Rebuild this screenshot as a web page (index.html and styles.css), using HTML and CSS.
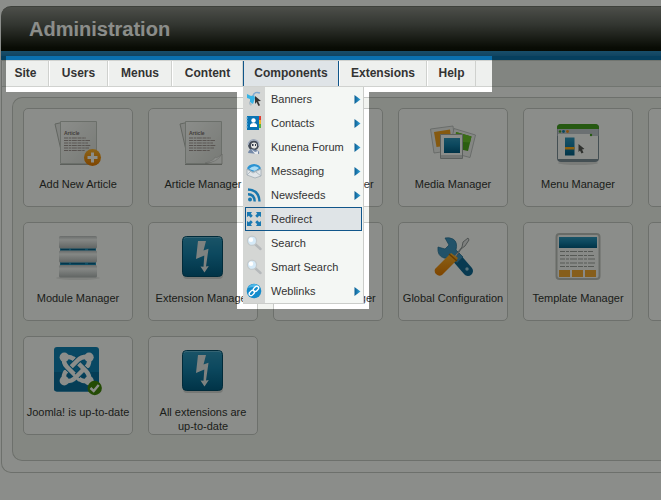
FILE: index.html
```html
<!DOCTYPE html>
<html lang="en">
<head>
<meta charset="utf-8">
<title>Administration</title>
<link rel="stylesheet" href="styles.css">
</head>
<body>
<svg class="defs" aria-hidden="true">
  <defs>
    <linearGradient id="paper" x1="0" y1="0" x2="1" y2="1"><stop offset="0" stop-color="#fff"/><stop offset="1" stop-color="#dcdddb"/></linearGradient>
    <linearGradient id="blue" x1="0" y1="0" x2="0" y2="1"><stop offset="0" stop-color="#2f96c0"/><stop offset=".45" stop-color="#1580ae"/><stop offset="1" stop-color="#005a84"/></linearGradient>
    <linearGradient id="bar" x1="0" y1="0" x2="0" y2="1"><stop offset="0" stop-color="#bfc1c4"/><stop offset=".3" stop-color="#f4f5f6"/><stop offset="1" stop-color="#b2b5b8"/></linearGradient>
    <linearGradient id="gold" x1="0" y1="0" x2="0" y2="1"><stop offset="0" stop-color="#ffb22e"/><stop offset="1" stop-color="#e87a00"/></linearGradient>
    <linearGradient id="tri" x1="0" y1="0" x2="1" y2="0"><stop offset="0" stop-color="#0b5e92"/><stop offset="1" stop-color="#36a6dc"/></linearGradient>
    <symbol id="i-article" viewBox="0 0 48 48">
      <path d="M1 5l9-2 2 34-3 3z" fill="#eee" stroke="#b5b7b4"/>
      <path d="M6.500 2.500h36v42h-36z" fill="url(#paper)" stroke="#c5c7c4"/>
      <path d="M6 45.500h37" stroke="#a9aba8"/>
      <text x="10" y="16" font-size="5" font-weight="bold" fill="#78696a">Article</text>
      <path d="M10 19h22M10 21.500h26M10 24h24M10 26.500h27M10 29h25M10 31.500h21" stroke="#a39797" stroke-width="1.200" stroke-dasharray="4 .7 2.500 .6 5 .7"/>
    </symbol>
    <symbol id="i-extension" viewBox="0 0 48 48">
      <rect x="4" y="6" width="40" height="40" rx="4" fill="#000" opacity=".15"/>
      <rect x="3.500" y="3.500" width="40" height="40" rx="4" fill="url(#blue)" stroke="#004a6c"/>
      <path d="M5 6q0-1.500 2-1.500h33q2 0 2 1.500" fill="none" stroke="#6dbbda" stroke-width=".8"/>
      <path d="M19 8h8l-2.500 9.500 5-1.800L27 33.500l2.800-.5-4.300 6.500-4-6 3 .3.800-11.300L17 26z" fill="#e8ebed"/>
    </symbol>
    <symbol id="i-search" viewBox="0 0 16 16">
      <path d="M9.500 9.500l5 4.500" stroke="#b5b9bb" stroke-width="2.400" stroke-linecap="round"/>
      <circle cx="6" cy="5.800" r="4.600" fill="#d5eaf8" stroke="#c4c9cb" stroke-width="1.200"/>
      <circle cx="5" cy="4.800" r="2.200" fill="#fff"/>
    </symbol>
    <symbol id="i-arrow" viewBox="0 0 7 9"><path d="M.5 0L6.500 4.500.5 9z" fill="url(#tri)"/></symbol>
  </defs>
</svg>

<div class="shell">
  <header class="banner"><h1>Administration</h1></header>

  <nav class="menubar" aria-label="Main">
    <ul class="menubar-list">
      <li><a href="#">Site</a></li>
      <li><a href="#">Users</a></li>
      <li><a href="#">Menus</a></li>
      <li><a href="#">Content</a></li>
      <li class="open"><a href="#">Components</a>
        <ul class="dropdown">
          <li><a href="#"><svg class="mini" viewBox="0 0 16 16"><path d="M1 3l4 2 3-1 1 3-2 6-3-2 0-3-3-1z" fill="#35b3e6"/><path d="M3 10l3 3-1 2-2-2z" fill="#aebcc4"/><path d="M7 5c1-4 4-4 7-3" fill="none" stroke="#7fa9d2" stroke-width="1.500"/><path d="M9 5l6 5-3 .3 2 4-1.500.7-2-4L9 13z" fill="#333"/></svg>Banners<svg class="arrow"><use href="#i-arrow"/></svg></a></li>
          <li><a href="#"><svg class="mini" viewBox="0 0 16 16"><rect x="1" y="1" width="12" height="14" fill="#0874b4"/><path d="M13 1h2v4h-2z" fill="#e23b2e"/><path d="M13 5h2v4h-2z" fill="#f4b62c"/><path d="M13 9h2v4h-2z" fill="#59b33a"/><path d="M0 3h2M0 6h2M0 9h2M0 12h2" stroke="#78b8dc"/><circle cx="7.500" cy="5.500" r="2.200" fill="#fff"/><path d="M4 12v-2q1-2 3.500-2T11 10v2z" fill="#fff"/></svg>Contacts<svg class="arrow"><use href="#i-arrow"/></svg></a></li>
          <li><a href="#"><svg class="mini" viewBox="0 0 16 16"><circle cx="7.500" cy="6" r="5.500" fill="#454c59"/><path d="M2 6q1-5 6-5 5 0 5 6" fill="none" stroke="#a7b2c4" stroke-width="1.300"/><circle cx="8" cy="6.500" r="3" fill="#e6e6e4"/><path d="M6 5h1.500v2H6zM9 5h1v2H9z" fill="#30394a"/><path d="M2 14q1-4 4-4l4 1q4 1 3 4z" fill="#7489a8"/><path d="M5 10l4 3 3-1v3H9z" fill="#e8ebef"/></svg>Kunena Forum<svg class="arrow"><use href="#i-arrow"/></svg></a></li>
          <li><a href="#"><svg class="mini" viewBox="0 0 16 16"><ellipse cx="8" cy="6.500" rx="7" ry="5.500" fill="#2b93d2"/><path d="M3 6q5-5 10-1l-4 3z" fill="#a9dcf5"/><path d="M1 6l6 3 8-3v7l-6 2-8-3z" fill="#e1e5e8" stroke="#9aa5ad" stroke-width=".7"/><path d="M1 6l6 4 8-4M1 12l4-4M15 13l-5-4" fill="none" stroke="#a3b0b9" stroke-width=".8"/></svg>Messaging<svg class="arrow"><use href="#i-arrow"/></svg></a></li>
          <li><a href="#"><svg class="mini" viewBox="0 0 16 16"><circle cx="4" cy="12.500" r="2" fill="#1977ae"/><path d="M2 7.200q6.500 0 6.700 7.300M2 2.500q11 .5 11.500 12" fill="none" stroke="#1977ae" stroke-width="2.400"/></svg>Newsfeeds<svg class="arrow"><use href="#i-arrow"/></svg></a></li>
          <li class="current"><a href="#"><svg class="mini" viewBox="0 0 16 16"><g fill="#1979b2"><path d="M1 1h5L4.800 2.700l2 2-2 2-2-2L1 6z"/><path d="M15 1h-5l1.200 1.700-2 2 2 2 2-2L15 6z"/><path d="M1 15h5l-1.200-1.700 2-2-2-2-2 2L1 10z"/><path d="M15 15h-5l1.200-1.700-2-2 2-2 2 2L15 10z"/></g></svg>Redirect</a></li>
          <li><a href="#"><svg class="mini"><use href="#i-search"/></svg>Search</a></li>
          <li><a href="#"><svg class="mini"><use href="#i-search"/></svg>Smart Search</a></li>
          <li><a href="#"><svg class="mini" viewBox="0 0 16 16"><circle cx="8" cy="8" r="7.300" fill="#138bcb"/><path d="M2 5q2-4 7-4 4 1 5 4-6-2-12 0z" fill="#50b8e8"/><g fill="none" stroke="#fff" stroke-width="1.400"><rect x="-3" y="-1.900" width="6" height="3.800" rx="1.900" transform="translate(5.800 10) rotate(-45)"/><rect x="-3" y="-1.900" width="6" height="3.800" rx="1.900" transform="translate(10 5.800) rotate(-45)"/></g></svg>Weblinks<svg class="arrow"><use href="#i-arrow"/></svg></a></li>
        </ul>
      </li>
      <li><a href="#">Extensions</a></li>
      <li><a href="#">Help</a></li>
    </ul>
  </nav>

  <main class="panel">
    <a class="card" href="#"><svg class="icon" viewBox="0 0 48 48"><use href="#i-article"/><circle cx="38.500" cy="38.500" r="8.500" fill="url(#gold)"/><path d="M38.500 33.500v10M33.500 38.500h10" stroke="#fff" stroke-width="3"/></svg><span>Add New Article</span></a>
    <a class="card" href="#"><svg class="icon" viewBox="0 0 48 48"><use href="#i-article"/><path d="M26 45q10-2 17-10v10z" fill="#f8f8f7" stroke="#a9aba8" stroke-width=".7"/><path d="M26 44q10-3 10-6 2 2 7-3-5 9-17 9z" fill="#fff" stroke="#bbb" stroke-width=".5"/></svg><span>Article Manager</span></a>
    <a class="card" href="#"><span class="icon"></span><span>Category Manager</span></a>
    <a class="card" href="#"><svg class="icon" viewBox="0 0 48 48"><g stroke="#b4b6b8" stroke-width=".8"><path d="M1.500 10L24 7l3 24-22 3z" fill="#f2f2f2"/><path d="M25 9.500L46.500 16 41 38.500 20 33z" fill="#f2f2f2"/></g><path d="M5 13l16-2.500L23 26 7.500 28z" fill="#f4a01e"/><path d="M27 13l15.500 4.500L39 32l-14-3z" fill="#4fa81c"/><path d="M27 13l15.500 4.500-1.500 6-14-1z" fill="#6cc42c"/><path d="M11.500 15.500h22v24h-22z" fill="#fff" stroke="#a9acae"/><path d="M12 36h21v3H12z" fill="#d4d6d8"/><path d="M15 19h16v15H15z" fill="url(#blue)"/></svg><span>Media Manager</span></a>
    <a class="card" href="#"><svg class="icon" viewBox="0 0 48 48"><ellipse cx="24" cy="44" rx="20" ry="2" fill="#000" opacity=".12"/><rect x="3" y="5" width="42" height="38" rx="4" fill="#7d8c9a"/><path d="M3 10V8.500Q3 5 7 5h34q4 0 4 3.500V10z" fill="#45a021"/><path d="M3.500 10h41v7h-41z" fill="#c5cad3"/><path d="M4 17h40v23H4z" fill="#fff"/><path d="M4 15h33v2.500H4z" fill="#fff"/><circle cx="6" cy="12.500" r="1.200" fill="#45a021"/><circle cx="9.500" cy="12.500" r="1.400" fill="#157fb2"/><circle cx="13.500" cy="12.500" r="1.400" fill="#f4901e"/><circle cx="37" cy="16" r="1.200" fill="#45a021"/><path d="M11 18.500h9.500v18H11z" fill="url(#blue)"/><path d="M11 28h9.500v2.500H11z" fill="#ffad1f"/><path d="M24.500 25l6 5-2.500.5 1.500 3-2 1-1.500-3-1.500 1.500z" fill="#555"/></svg><span>Menu Manager</span></a>
    <div class="card"></div>

    <a class="card" href="#"><svg class="icon" viewBox="0 0 48 48"><ellipse cx="24" cy="45" rx="22" ry="2" fill="#000" opacity=".08"/><path d="M6 14h36v20H6z" fill="#1b8cbd"/><path d="M7 16.500h34M7 30.500h34" stroke="#075f8c" stroke-width="1.500" stroke-dasharray="8 2 14 3"/><rect x="5" y="3" width="38" height="12.500" rx="1.500" fill="url(#bar)"/><rect x="5" y="17.500" width="38" height="12" rx="1.500" fill="url(#bar)"/><rect x="5" y="32" width="38" height="12.500" rx="1.500" fill="url(#bar)"/></svg><span>Module Manager</span></a>
    <a class="card" href="#"><svg class="icon"><use href="#i-extension"/></svg><span>Extension Manager</span></a>
    <a class="card" href="#"><span class="icon"></span><span>Language Manager</span></a>
    <a class="card" href="#"><svg class="icon" viewBox="0 0 48 48"><path d="M26 23L39 38" stroke="#0d6797" stroke-width="10" stroke-linecap="round"/><path d="M16 5l4 7-4 4-7-2q-1 9 6 11 4 1 7-1l6 6 6-6-7-7q2-8-3-11-4-2-8-1z" fill="#3d93c2" stroke="#236e98" stroke-width=".7"/><circle cx="38" cy="36" r="1.700" fill="#9dcae0"/><path d="M24 25L33 14l1-5 5-4 1 2-4 6-4 3-7 11z" fill="#e8e8ea" stroke="#777c82" stroke-width=".8"/><path d="M6 36L20 22l2-2 7 5-2 3-14 14q-3 2-6-1-2-2-1-5z" fill="url(#gold)"/><path d="M20 21l8 7" stroke="#ba6800" stroke-width="1.500"/></svg><span>Global Configuration</span></a>
    <a class="card" href="#"><svg class="icon" viewBox="0 0 48 48"><rect x="2.500" y="1" width="43" height="45" rx="3" fill="#fafafa" stroke="#bfc1be" stroke-width="2"/><path d="M5 4h38v11H5z" fill="url(#blue)"/><path d="M6 18.500h33M6 22.500h34M6 26h36M6 30h35M6 33.500h34" stroke="#9d9f9d" stroke-dasharray="5 1 3 1 7 1"/><path d="M5 37h11v7H5zM18 37h11v7H18zM31 37h11v7H31z" fill="#f6a933"/></svg><span>Template Manager</span></a>
    <div class="card"></div>

    <a class="card" href="#"><svg class="icon" viewBox="0 0 48 48"><rect x="0" y="0" width="45" height="44.500" rx="3" fill="#0d80b8"/><path d="M0 25h45v16.500q0 3-3 3H3q-3 0-3-3z" fill="#086ca0"/><g fill="none"><path d="M10 34q7 1 11-3l12-12" stroke="#0b76ac" stroke-width="6.500"/><path d="M10 34q7 1 11-3l12-12" stroke="#fff" stroke-width="4.500"/><path d="M35 34q1-6-3-10L19 11" stroke="#0b76ac" stroke-width="6.500"/><path d="M35 34q1-6-3-10L19 11" stroke="#fff" stroke-width="4.500"/><path d="M35 10q-7-1-11 3L12 25" stroke="#0b76ac" stroke-width="6.500"/><path d="M35 10q-7-1-11 3L12 25" stroke="#fff" stroke-width="4.500"/><path d="M10 10q-1 6 3 10l13 13" stroke="#0b76ac" stroke-width="6.500"/><path d="M10 10q-1 6 3 10l13 13" stroke="#fff" stroke-width="4.500"/><path d="M23 29l5-5" stroke="#0b76ac" stroke-width="6.500"/><path d="M20 32l9-9" stroke="#fff" stroke-width="4.500"/><path d="M10 10q6-1 10 2M35 10q1 6-2 10M35 34q-6 1-10-2M10 34q-1-6 2-10" stroke="#fff" stroke-width="4.500"/></g><g fill="#fff"><circle cx="10.300" cy="10.300" r="4.700"/><circle cx="35" cy="10.300" r="4.700"/><circle cx="10.300" cy="33.700" r="4.700"/><circle cx="35" cy="33.700" r="4.700"/></g><circle cx="40.700" cy="41" r="7.200" fill="#42850b"/><path d="M36.500 41l3.200 3 5-6" fill="none" stroke="#fff" stroke-width="2.400"/></svg><span>Joomla! is up-to-date</span></a>
    <a class="card" href="#"><svg class="icon"><use href="#i-extension"/></svg><span>All extensions are up-to-date</span></a>
  </main>
</div>
<div class="dimmer"></div>
</body>
</html>
```
FILE: styles.css
```css
* { box-sizing: border-box; }

body {
  margin: 0;
  min-height: 100vh;
  padding: 6px 0 0 1px;
  overflow: hidden;
  background: #fff;
  color: #333;
  font: 11px/14px "Liberation Sans", Arial, sans-serif;
}

a { color: inherit; text-decoration: none; }
ul { margin: 0; padding: 0; list-style: none; }
.defs { position: absolute; width: 0; height: 0; }

.shell {
  border: 1px solid #c8cac7;
  border-width: 0 0 1px 1px;
  border-radius: 10px 0 0 10px;
  padding-bottom: 11px;
}

/* Title strip with the blue rule below it */
.banner {
  display: flex;
  align-items: center;
  height: 54px;
  margin-left: -1px;
  padding: 0 28px 10px;
  border-top: 1px solid #70726e;
  border-radius: 10px 0 0 0;
  background:
    linear-gradient(#2b8cc4, #1f7ab6 50%, #0b70ae 60%, #0b70ae) bottom / 100% 9px no-repeat,
    linear-gradient(#8c8c89, #5c5e5a 40%, #10120a 92%, #0c0e08) top / 100% 44px no-repeat;
}

h1 {
  margin: 0;
  color: #fff;
  font-size: 20px;
  line-height: 24px;
}

/* Menu bar */
.menubar {
  border: 1px solid #d0d2cf;
  border-width: 1px 0;
  background: #eef0ee;
}

.menubar-list {
  display: grid;
  grid-template-columns: 47px 59px 64px 71px 96px 88px 49px;
}

.menubar-list > li {
  position: relative;
  border-right: 1px solid #cfd1ce;
  border-left: 1px solid #fff;
}

.menubar-list > li > a {
  display: block;
  text-align: center;
  font-size: 12px;
  font-weight: bold;
  line-height: 25px;
}

.menubar-list > .open {
  border-color: #10568a;
  background: #dfe4e7;
}

/* Open menu */
.dropdown {
  position: absolute;
  z-index: 2;
  top: 100%;
  left: -1px;
  width: 121px;
  margin-top: 1px;
  border: 1px solid #cbcdca;
  border-width: 0 1px 1px 0;
  background: linear-gradient(90deg, #d4d6d4 22px, #f4f7f4 22px);
}

.dropdown a {
  display: flex;
  align-items: center;
  height: 24px;
  margin: 0 1px 0 2px;
  border: 1px solid transparent;
}

.dropdown .current a {
  border-color: #10568a;
  background: linear-gradient(90deg, #d4d6d4 19px, #dfe4e7 19px);
}

.mini { width: 16px; height: 16px; margin-right: 9px; flex: none; }
.arrow { width: 7px; height: 9px; margin-left: auto; flex: none; }

/* Shortcut cards */
.panel {
  display: grid;
  grid-template-columns: repeat(6, 110px);
  grid-auto-rows: 99px;
  gap: 15px;
  margin: 10px 0 0 10px;
  padding: 10px 0 25px 10px;
  overflow: hidden;
  border: 1px solid #c8cac7;
  border-right: 0;
  border-radius: 10px 0 0 10px;
  background: #f2f4f0;
}

.card {
  display: flex;
  flex-direction: column;
  align-items: center;
  gap: 10px;
  padding: 10px 2px 0;
  border: 1px solid #c8cac7;
  border-radius: 5px;
  background: #fff;
  text-align: center;
}

.icon { width: 48px; height: 48px; flex: none; overflow: visible; }

/* Shade over everything but the menu bar and its open menu */
.dimmer {
  position: absolute;
  inset: 0;
  z-index: 5;
  pointer-events: none;
  background: rgb(3 6 0 / .46);
  clip-path: polygon(evenodd, 0 0, 100% 0, 100% 100%, 0 100%, 0 0, 6px 56px, 492px 56px, 492px 92px, 369px 92px, 369px 309px, 237px 309px, 237px 92px, 6px 92px, 6px 56px, 0 0);
}
```
